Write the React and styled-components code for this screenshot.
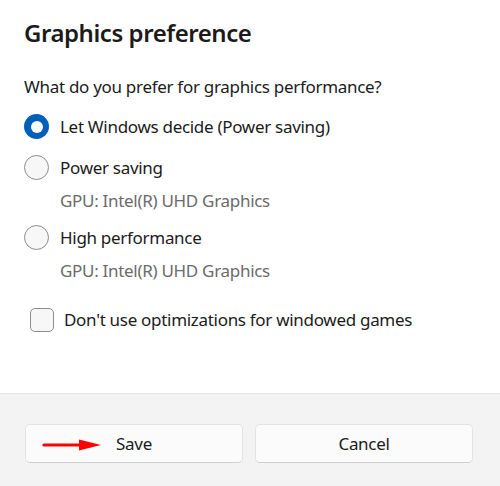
import React from "react";
import styled, { createGlobalStyle } from "styled-components";

const Global = createGlobalStyle`
  html, body { margin: 0; padding: 0; background: #ffffff; }
  body { font-family: "Noto Sans", "Open Sans", sans-serif; color: #1b1b1b; }
`;

const Dialog = styled.div`
  width: 500px;
  height: 486px;
  display: flex;
  flex-direction: column;
  background: #ffffff;
`;

const Body = styled.div`
  flex: 1;
  padding: 16px 24px 0 24px;
  display: flex;
  flex-direction: column;
`;

const Title = styled.h1`
  margin: 0;
  font-size: 24px;
  font-weight: 600;
  line-height: 34px;
  letter-spacing: -0.45px;
  color: #1b1b1b;
`;

const Question = styled.p`
  margin: 25px 0 0 0;
  font-size: 17px;
  line-height: 24px;
  letter-spacing: -0.3px;
`;

const Options = styled.div`
  display: flex;
  flex-direction: column;
  margin-top: 15px;
`;

const Option = styled.label`
  display: grid;
  grid-template-columns: 25px 1fr;
  column-gap: 11px;
  align-items: center;
  margin-bottom: ${(p) => p.$gap}px;
`;

const Radio = styled.span`
  width: 25px;
  height: 25px;
  box-sizing: border-box;
  border-radius: 50%;
  display: flex;
  align-items: center;
  justify-content: center;
  background: ${(p) => (p.$checked ? "#005fb8" : "#f7f7f7")};
  border: ${(p) => (p.$checked ? "none" : "1px solid #8d8d8d")};
  &::after {
    content: "";
    display: ${(p) => (p.$checked ? "block" : "none")};
    width: 12px;
    height: 12px;
    border-radius: 50%;
    background: #ffffff;
  }
`;

const OptionLabel = styled.span`
  font-size: 17px;
  line-height: 24px;
  letter-spacing: -0.3px;
`;

const Sub = styled.span`
  grid-column: 2;
  font-size: 17px;
  line-height: 24px;
  letter-spacing: -0.3px;
  color: #6b6b6b;
  margin-top: 9px;
`;

const CheckRow = styled.label`
  display: flex;
  align-items: center;
  gap: 10px;
  margin-top: 25px;
  padding-left: 6px;
`;

const Box = styled.span`
  width: 24px;
  height: 24px;
  box-sizing: border-box;
  border-radius: 5px;
  border: 1px solid #8d8d8d;
  background: #f7f7f7;
`;

const Footer = styled.div`
  height: 93px;
  box-sizing: border-box;
  background: #f3f3f3;
  border-top: 1px solid #e5e5e5;
  padding: 30px 27px 0 25px;
  display: grid;
  grid-template-columns: 1fr 1fr;
  column-gap: 12px;
  align-items: start;
`;

const Button = styled.button`
  position: relative;
  height: 39px;
  box-sizing: border-box;
  border-radius: 5px;
  border: 1px solid #e3e3e3;
  border-bottom-color: #cfcfcf;
  background: #fbfbfb;
  font-family: "Noto Sans", "Open Sans", sans-serif;
  font-size: 17px;
  letter-spacing: -0.3px;
  color: #1b1b1b;
  padding: 0;
`;

const Arrow = styled.svg`
  position: absolute;
  left: 16px;
  top: 14px;
`;

export default function App() {
  return (
    <>
      <Global />
      <Dialog>
        <Body>
          <Title>Graphics preference</Title>
          <Question>What do you prefer for graphics performance?</Question>
          <Options>
            <Option $gap={16}>
              <Radio $checked />
              <OptionLabel>Let Windows decide (Power saving)</OptionLabel>
            </Option>
            <Option $gap={12}>
              <Radio />
              <OptionLabel>Power saving</OptionLabel>
              <Sub>GPU: Intel(R) UHD Graphics</Sub>
            </Option>
            <Option $gap={0}>
              <Radio />
              <OptionLabel>High performance</OptionLabel>
              <Sub>GPU: Intel(R) UHD Graphics</Sub>
            </Option>
          </Options>
          <CheckRow>
            <Box />
            <OptionLabel>Don't use optimizations for windowed games</OptionLabel>
          </CheckRow>
        </Body>
        <Footer>
          <Button>
            <Arrow width="60" height="12" viewBox="0 0 60 12">
              <path d="M2 6 H38" stroke="#ff0000" strokeWidth="3.2" strokeLinecap="round" />
              <path d="M37 0.5 L59 6 L37 11.5 Z" fill="#ff0000" />
            </Arrow>
            Save
          </Button>
          <Button>Cancel</Button>
        </Footer>
      </Dialog>
    </>
  );
}
